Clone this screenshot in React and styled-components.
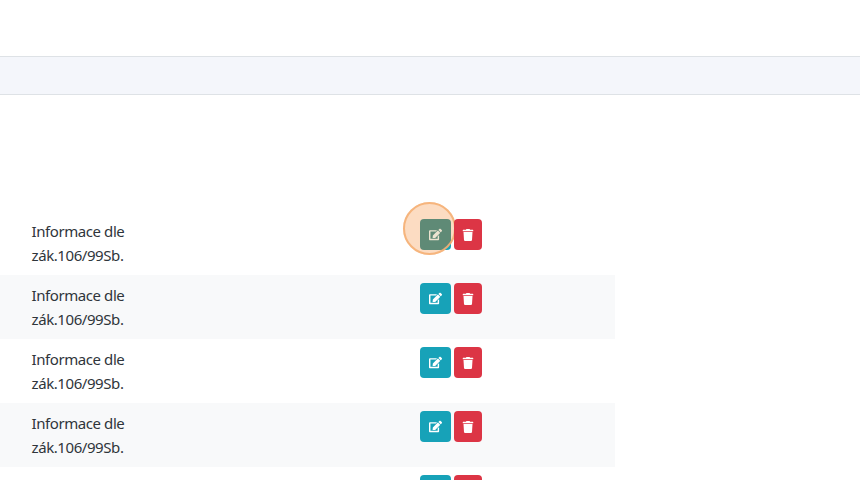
import React from "react";
import styled, { createGlobalStyle } from "styled-components";
import { FaEdit, FaTrash } from "react-icons/fa";

const Global = createGlobalStyle`
  html, body { margin: 0; padding: 0; background: #fff; height: 480px; overflow: hidden; }
  * { box-sizing: border-box; }
`;
const Page = styled.div`
  width: 860px; height: 480px; overflow: hidden;
  font-family: "Noto Sans", "Liberation Sans", sans-serif; color: #2f353b;
`;
const TopBar = styled.header`
  height: 57px; background: #fff; border-bottom: 1px solid #dee2e6;
`;
const Strip = styled.div`
  height: 38px; background: #f4f6fb; border-bottom: 1px solid #dee2e6;
`;
const Content = styled.main`
  padding-top: 116px; width: 615px;
`;
const Row = styled.div`
  height: 64px; display: grid; grid-template-columns: 420px 1fr;
  padding-top: 8px; isolation: isolate;
  background: ${p => (p.$striped ? "#f8f9fa" : "transparent")};
`;
const Label = styled.div`
  padding-left: 31.5px; font-size: 15px; line-height: 24px; letter-spacing: -0.42px; width: 150px;
`;
const Actions = styled.div`
  display: flex; gap: 3px; align-items: flex-start;
`;
const IconButton = styled.button`
  position: relative;
  height: 31px; width: ${p => p.$w}px; padding: 0; border: 0; border-radius: 4px;
  background: ${p => p.$bg}; color: #fff; font-size: 13px;
  display: flex; align-items: center; justify-content: center;
`;
const FocusedButton = styled(IconButton)`
  background: radial-gradient(circle 26px at 9.5px 9.5px, #5f8a76 98%, #17a2b8 100%);
  color: #ebe3d0;
  &::before {
    content: ""; position: absolute; z-index: -1;
    left: -17px; top: -17px; width: 53px; height: 53px; border-radius: 50%;
    background: #fcdcc2;
  }
`;
const Ring = styled.span`
  position: absolute; left: -17px; top: -17px; width: 53px; height: 53px; border-radius: 50%;
  border: 2px solid rgba(245, 176, 118, 0.9);
  pointer-events: none;
`;

export default function App() {
  const rows = [0, 1, 2, 3, 4];
  return (
    <Page>
      <Global />
      <TopBar />
      <Strip />
      <Content>
        {rows.map(i => (
          <Row key={i} $striped={i % 2 === 1}>
            <Label>Informace dle zák.106/99Sb.</Label>
            <Actions>
              {i === 0 ? (
                <FocusedButton $w={31} $bg="#17a2b8">
                  <FaEdit />
                  <Ring />
                </FocusedButton>
              ) : (
                <IconButton $w={31} $bg="#17a2b8"><FaEdit /></IconButton>
              )}
              <IconButton $w={28} $bg="#dc3545"><FaTrash size={12} /></IconButton>
            </Actions>
          </Row>
        ))}
      </Content>
    </Page>
  );
}
